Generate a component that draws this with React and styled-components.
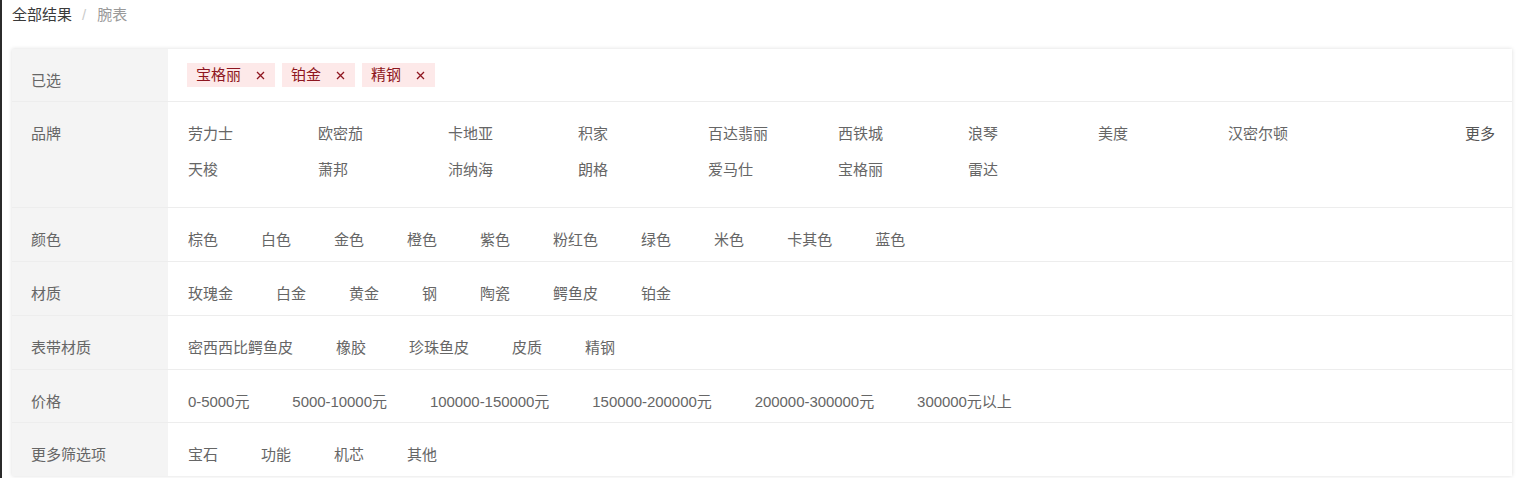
import React from 'react'
import styled, { createGlobalStyle } from 'styled-components'

const GlobalStyle = createGlobalStyle`
  html, body {
    margin: 0;
    padding: 0;
    background: #fff;
  }
  body {
    border-left: 2px solid #2b2b2b;
    min-height: 100vh;
    box-sizing: border-box;
    font-family: "Liberation Sans", "Noto Sans CJK SC", sans-serif;
    font-size: 15px;
    color: #666;
  }
`

const Page = styled.div`
  padding: 5px 14px 0 10px;
`

const Breadcrumb = styled.div`
  display: flex;
  align-items: center;
  height: 20px;
  line-height: 20px;
  font-size: 15px;
  margin-bottom: 24px;
`

const Crumb = styled.span`
  color: ${({ current }) => (current ? '#999' : '#3a3a3a')};
`

const Slash = styled.span`
  color: #ccc;
  margin: 0 11px 0 10px;
`

const Panel = styled.div`
  margin-top: 1px;
  background: #fff;
  box-shadow: 0 0 4px rgba(0, 0, 0, 0.14);
`

const Row = styled.div`
  display: grid;
  grid-template-columns: 156px 1fr;
  border-bottom: 1px solid #ededed;
  &:last-child {
    border-bottom: none;
  }
`

const Label = styled.div`
  background: #f4f4f4;
  padding: 22px 0 0 19px;
  line-height: 20px;
  color: #666;
`

const Values = styled.div`
  padding: 22px 17px ${({ bottom }) => bottom}px 20px;
  display: flex;
  align-items: flex-start;
  line-height: 20px;
`

const SelectedValues = styled.div`
  padding: 14px 17px 14px 19px;
  display: flex;
`

const ItemList = styled.div`
  display: flex;
  gap: 43px;
`

const Item = styled.span`
  color: #666;
  white-space: nowrap;
  cursor: pointer;
  letter-spacing: ${({ digits }) => (digits ? '-0.05px' : '0')};
`

const BrandGrid = styled.div`
  flex: 1;
  display: grid;
  grid-template-columns: repeat(9, 130px);
  row-gap: 16px;
`

const More = styled.span`
  color: #555;
  cursor: pointer;
`

const TagList = styled.div`
  display: flex;
  gap: 7px;
`

const Tag = styled.span`
  display: inline-flex;
  align-items: center;
  gap: 15px;
  height: 24px;
  line-height: 24px;
  padding: 0 10px 0 9px;
  background: #fde9e9;
  color: #8e1620;
`

const Close = () => (
  <svg width="9" height="9" viewBox="0 0 9 9">
    <path d="M1 1L8 8M8 1L1 8" stroke="#8e1620" strokeWidth="1.3" fill="none" />
  </svg>
)

const brands = [
  '劳力士', '欧密茄', '卡地亚', '积家', '百达翡丽', '西铁城', '浪琴', '美度', '汉密尔顿',
  '天梭', '萧邦', '沛纳海', '朗格', '爱马仕', '宝格丽', '雷达',
]

const rows = [
  { label: '颜色', bottom: 11, items: ['棕色', '白色', '金色', '橙色', '紫色', '粉红色', '绿色', '米色', '卡其色', '蓝色'] },
  { label: '材质', bottom: 11, items: ['玫瑰金', '白金', '黄金', '钢', '陶瓷', '鳄鱼皮', '铂金'] },
  { label: '表带材质', bottom: 11, items: ['密西西比鳄鱼皮', '橡胶', '珍珠鱼皮', '皮质', '精钢'] },
  { label: '价格', bottom: 10, digits: true, items: ['0-5000元', '5000-10000元', '100000-150000元', '150000-200000元', '200000-300000元', '300000元以上'] },
  { label: '更多筛选项', bottom: 11, items: ['宝石', '功能', '机芯', '其他'] },
]

const App = () => {
  return (
    <Page>
      <GlobalStyle />
      <Breadcrumb>
        <Crumb>全部结果</Crumb>
        <Slash>/</Slash>
        <Crumb current>腕表</Crumb>
      </Breadcrumb>

      <Panel>
        <Row>
          <Label>已选</Label>
          <SelectedValues>
            <TagList>
              {['宝格丽', '铂金', '精钢'].map((t) => (
                <Tag key={t}>
                  {t}
                  <Close />
                </Tag>
              ))}
            </TagList>
          </SelectedValues>
        </Row>

        <Row>
          <Label>品牌</Label>
          <Values bottom={27}>
            <BrandGrid>
              {brands.map((b) => (
                <Item key={b}>{b}</Item>
              ))}
            </BrandGrid>
            <More>更多</More>
          </Values>
        </Row>

        {rows.map((r) => (
          <Row key={r.label}>
            <Label>{r.label}</Label>
            <Values bottom={r.bottom}>
              <ItemList>
                {r.items.map((i) => (
                  <Item key={i} digits={r.digits}>{i}</Item>
                ))}
              </ItemList>
            </Values>
          </Row>
        ))}
      </Panel>
    </Page>
  )
}

export default App
